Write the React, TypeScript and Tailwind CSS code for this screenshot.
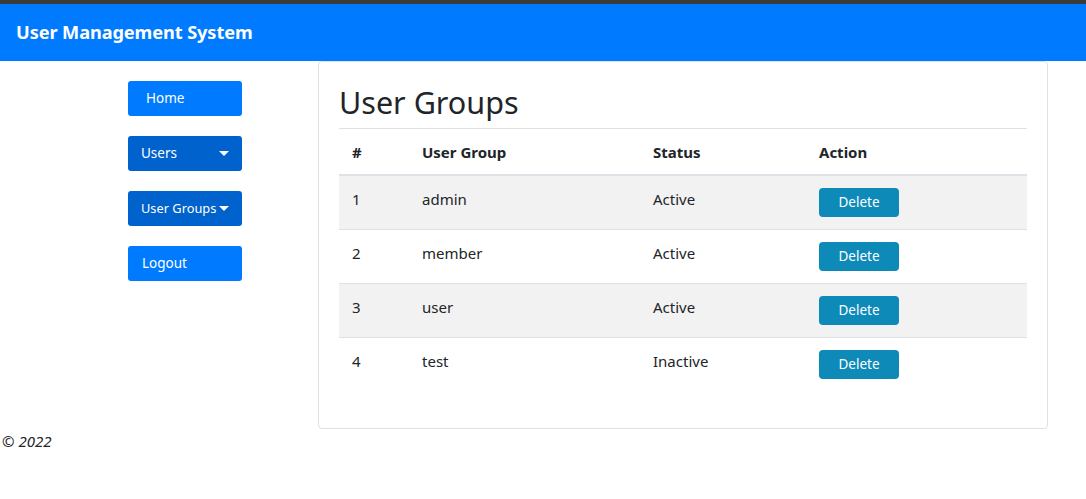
import React from "react";

const rows = [
  { id: 1, name: "admin", status: "Active" },
  { id: 2, name: "member", status: "Active" },
  { id: 3, name: "user", status: "Active" },
  { id: 4, name: "test", status: "Inactive" },
];

function Caret() {
  return (
    <svg width="10" height="6" viewBox="0 0 10 6" className="shrink-0">
      <path d="M0 0 L10 0 L5 5 Z" fill="white" />
    </svg>
  );
}

export default function App() {
  return (
    <div
      className="min-h-[499px] bg-white text-[#212529]"
      style={{ fontFamily: '"Segoe UI", "Noto Sans", sans-serif' }}
    >
      <div className="h-[4px] bg-[#3b3b3b]" />
      <header className="h-[57px] bg-[#007bff] flex items-center px-4">
        <span className="text-white font-bold text-[18.2px] tracking-[-0.1px]">User Management System</span>
      </header>
      <div className="flex">
        <aside className="w-[318px] shrink-0 pl-[128px] pt-[20px] flex flex-col gap-[20px]">
          <button className="w-[114px] h-[35px] rounded-[3px] bg-[#007bff] text-white text-[13.5px] text-left pl-[18px] whitespace-nowrap">
            Home
          </button>
          <button className="w-[114px] h-[35px] rounded-[3px] bg-[#0062cc] text-white text-[13.5px] flex items-center justify-between pl-[13px] pr-[13px] whitespace-nowrap">
            <span>Users</span>
            <Caret />
          </button>
          <button className="w-[114px] h-[35px] rounded-[3px] bg-[#0062cc] text-white text-[12.8px] flex items-center gap-[3px] pl-[13px] pr-[12px] whitespace-nowrap">
            <span>User Groups</span>
            <Caret />
          </button>
          <button className="w-[114px] h-[35px] rounded-[3px] bg-[#007bff] text-white text-[13.5px] text-left pl-[14px] whitespace-nowrap">
            Logout
          </button>
        </aside>
        <main className="w-[730px] border border-[#dee2e6] rounded-[4px] pt-[21px] pl-[20px] pr-[20px] pb-[21px]">
          <h2 className="text-[30.5px] leading-[38px] font-normal mb-[7px]">User Groups</h2>
          <table className="w-[688px] border-collapse text-[15px] mb-[16px]">
            <thead>
              <tr className="border-t border-[#dee2e6] border-b-2 border-b-[#dee2e6]">
                <th className="w-[71px] text-left font-bold px-[12px] pt-[11px] pb-[10px] leading-[24px] pl-[13px]">#</th>
                <th className="w-[231px] text-left font-bold px-[12px] pt-[11px] pb-[10px] leading-[24px]">User Group</th>
                <th className="w-[166px] text-left font-bold px-[12px] pt-[11px] pb-[10px] leading-[24px]">Status</th>
                <th className="text-left font-bold px-[12px] pt-[11px] pb-[10px] leading-[24px]">Action</th>
              </tr>
            </thead>
            <tbody>
              {rows.map((r, i) => (
                <tr
                  key={r.id}
                  className={
                    (i % 2 === 0 ? "bg-[#f2f2f2] " : "bg-white ") +
                    "border-t border-[#dee2e6]"
                  }
                >
                  <td className="align-top px-[12px] pl-[13px] py-[11px] leading-[24px]">{r.id}</td>
                  <td className="align-top px-[12px] py-[11px] leading-[24px]">{r.name}</td>
                  <td className="align-top px-[12px] py-[11px] leading-[24px]">{r.status}</td>
                  <td className="align-top px-[12px] py-[12px]">
                    <button className="w-[80px] h-[29px] rounded-[4px] bg-[#0e8ab9] text-white text-[13.5px]">
                      Delete
                    </button>
                  </td>
                </tr>
              ))}
            </tbody>
          </table>
        </main>
      </div>
      <footer className="pl-[2px] italic text-[15px] leading-[24px]">© 2022</footer>
    </div>
  );
}
